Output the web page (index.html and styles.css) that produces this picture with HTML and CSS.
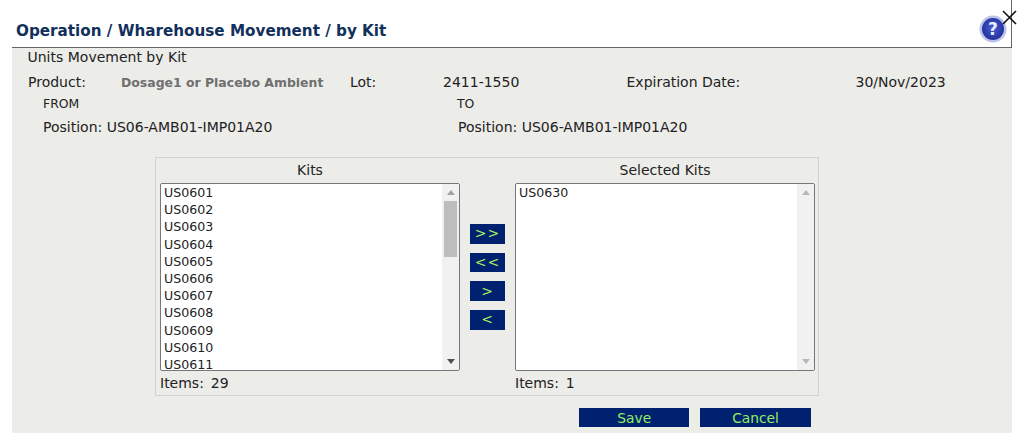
FILE: index.html
```html
<!DOCTYPE html>
<html lang="en">
<head>
<meta charset="utf-8">
<title>Wharehouse Movement by Kit</title>
<link rel="stylesheet" href="styles.css">
</head>
<body>
<div class="dialog">
  <span class="close">
    <svg width="16" height="16" viewBox="0 0 16 16"><path d="M2 2 L15 15 M15 2 L2 15" stroke="#111" stroke-width="1.6" fill="none"/></svg>
  </span>
  <header class="head">
    <h1 class="title">Operation / Wharehouse Movement / by Kit</h1>
    <svg class="help" width="28" height="28" viewBox="0 0 28 28">
      <defs>
        <radialGradient id="orb" cx="50%" cy="45%" r="60%">
          <stop offset="0" stop-color="#4a5cd0"/>
          <stop offset="0.7" stop-color="#2a3aa8"/>
          <stop offset="1" stop-color="#27329a"/>
        </radialGradient>
      </defs>
      <circle cx="14" cy="14" r="13.5" fill="#bcc3ea"/>
      <circle cx="14" cy="14" r="11" fill="url(#orb)"/>
      <text x="14" y="20" class="help-mark">?</text>
    </svg>
  </header>
  <main class="panel">
    <div class="subtitle">Units Movement by Kit</div>
    <div class="info">
      <span class="c-label">Product:</span>
      <span class="c-product">Dosage1 or Placebo Ambient</span>
      <span class="c-lot">Lot:</span>
      <span class="c-lotv">2411-1550</span>
      <span class="c-exp">Expiration Date:</span>
      <span class="c-expv">30/Nov/2023</span>
    </div>
    <div class="pair heads">
      <span class="from">FROM</span>
      <span class="to">TO</span>
    </div>
    <div class="pair positions">
      <span class="from">Position: US06-AMB01-IMP01A20</span>
      <span class="to">Position: US06-AMB01-IMP01A20</span>
    </div>
    <section class="picker">
      <div class="col">
        <div class="col-title">Kits</div>
        <div class="listbox">
          <div class="items">
            <div>US0601</div><div>US0602</div><div>US0603</div><div>US0604</div>
            <div>US0605</div><div>US0606</div><div>US0607</div><div>US0608</div>
            <div>US0609</div><div>US0610</div><div>US0611</div>
          </div>
          <div class="scroll">
            <span class="arrow up"></span>
            <span class="thumb"></span>
            <span class="arrow down"></span>
          </div>
        </div>
        <div class="count">Items: 29</div>
      </div>
      <div class="moves">
        <button class="mv">&gt;&gt;</button>
        <button class="mv">&lt;&lt;</button>
        <button class="mv">&gt;</button>
        <button class="mv">&lt;</button>
      </div>
      <div class="col">
        <div class="col-title">Selected Kits</div>
        <div class="listbox">
          <div class="items"><div>US0630</div></div>
          <div class="scroll">
            <span class="arrow up dim"></span>
            <span class="spacer"></span>
            <span class="arrow down dim"></span>
          </div>
        </div>
        <div class="count">Items: 1</div>
      </div>
    </section>
    <div class="actions">
      <button class="act">Save</button>
      <button class="act">Cancel</button>
    </div>
  </main>
</div>
</body>
</html>
```
FILE: styles.css
```css
* { box-sizing: border-box; }
html, body { margin: 0; padding: 0; height: 100%; background: #fff; overflow: hidden; }
body { font-family: "DejaVu Sans", Verdana, sans-serif; font-size: 14px; color: #222; }
.dialog { position: relative; width: 1000px; margin-left: 12px; height: 433px; display: flex; flex-direction: column; }
.close { position: absolute; left: 989px; top: 9px; width: 16px; height: 16px; line-height: 0; }
.head { height: 48px; flex: none; display: flex; align-items: flex-end; justify-content: space-between; border-bottom: 1px solid #666; padding: 0 4px 7px 4px; margin-right: 0.5px; border-right: 1px solid #666; }
.title { margin: 0; font-size: 15.2px; font-weight: bold; color: #12305c; line-height: 18px; }
.help { margin-bottom: -3px; margin-right: 0; }
.help-mark { font-family: "DejaVu Sans", sans-serif; font-size: 17px; font-weight: bold; fill: #e8ecff; text-anchor: middle; }
.panel { flex: 1; background: #ecece9; padding: 1px 0 0 15.5px; }
.subtitle { line-height: 17px; height: 17px; }
.info { display: flex; margin-top: 8px; line-height: 17px; height: 17px; padding-left: 0.5px; }
.c-label { width: 93px; }
.c-product { width: 229px; font-weight: bold; color: #6f6f6f; font-size: 12.45px; }
.c-lot { width: 93px; }
.c-lotv { width: 183.5px; }
.c-exp { width: 229px; }
.pair { display: flex; }
.heads { margin-top: 5px; line-height: 15px; height: 15px; font-size: 12.4px; }
.heads .from { margin-left: 15.5px; width: 414px; }
.positions { margin-top: 8px; line-height: 17px; height: 17px; }
.positions .from { margin-left: 15.5px; width: 415px; }
.picker { width: 664px; height: 239px; margin: 21px 0 0 127.5px; border: 1px solid #d2d2ce; display: flex; padding: 3px 0 0 4px; }
.col { width: 300px; flex: none; }
.col-title { text-align: center; line-height: 18px; height: 22px; }
.listbox { height: 188px; width: 300px; display: flex; background: #fff; border: 1px solid #777; border-radius: 2px; overflow: hidden; }
.items { flex: 1; padding: 0 0 0 3px; line-height: 17.2px; font-size: 12.6px; overflow: hidden; }
.scroll { width: 17px; flex: none; display: flex; flex-direction: column; background: #f1f1f1; align-items: center; padding: 6px 0 6px; }
.arrow { width: 0; height: 0; border-left: 4px solid transparent; border-right: 4px solid transparent; flex: none; }
.up { border-bottom: 5px solid #a3a3a3; }
.down { border-top: 5px solid #505050; }
.dim.up { border-bottom-color: #b8b8b8; }
.dim.down { border-top-color: #b8b8b8; }
.thumb { width: 13px; height: 56px; background: #bdbdbd; margin: 6px 0 auto; }
.spacer { flex: 1; }
.count { line-height: 17px; margin-top: 4px; word-spacing: 2.5px; }
.moves { width: 55px; flex: none; display: flex; flex-direction: column; align-items: center; padding-top: 63px; gap: 9.2px; }
.mv { width: 35px; height: 19.5px; border: 0; padding: 0; background: #002070; color: #a8f060; font: 14px/19px "DejaVu Sans", sans-serif; letter-spacing: 1px; }
.actions { display: flex; gap: 11px; margin: 12px 0 0 551.5px; }
.act { width: 110.4px; height: 19px; border: 0; padding: 1px 0 0; background: #002070; color: #90f060; font: 13.8px/18px "DejaVu Sans", sans-serif; }
```
